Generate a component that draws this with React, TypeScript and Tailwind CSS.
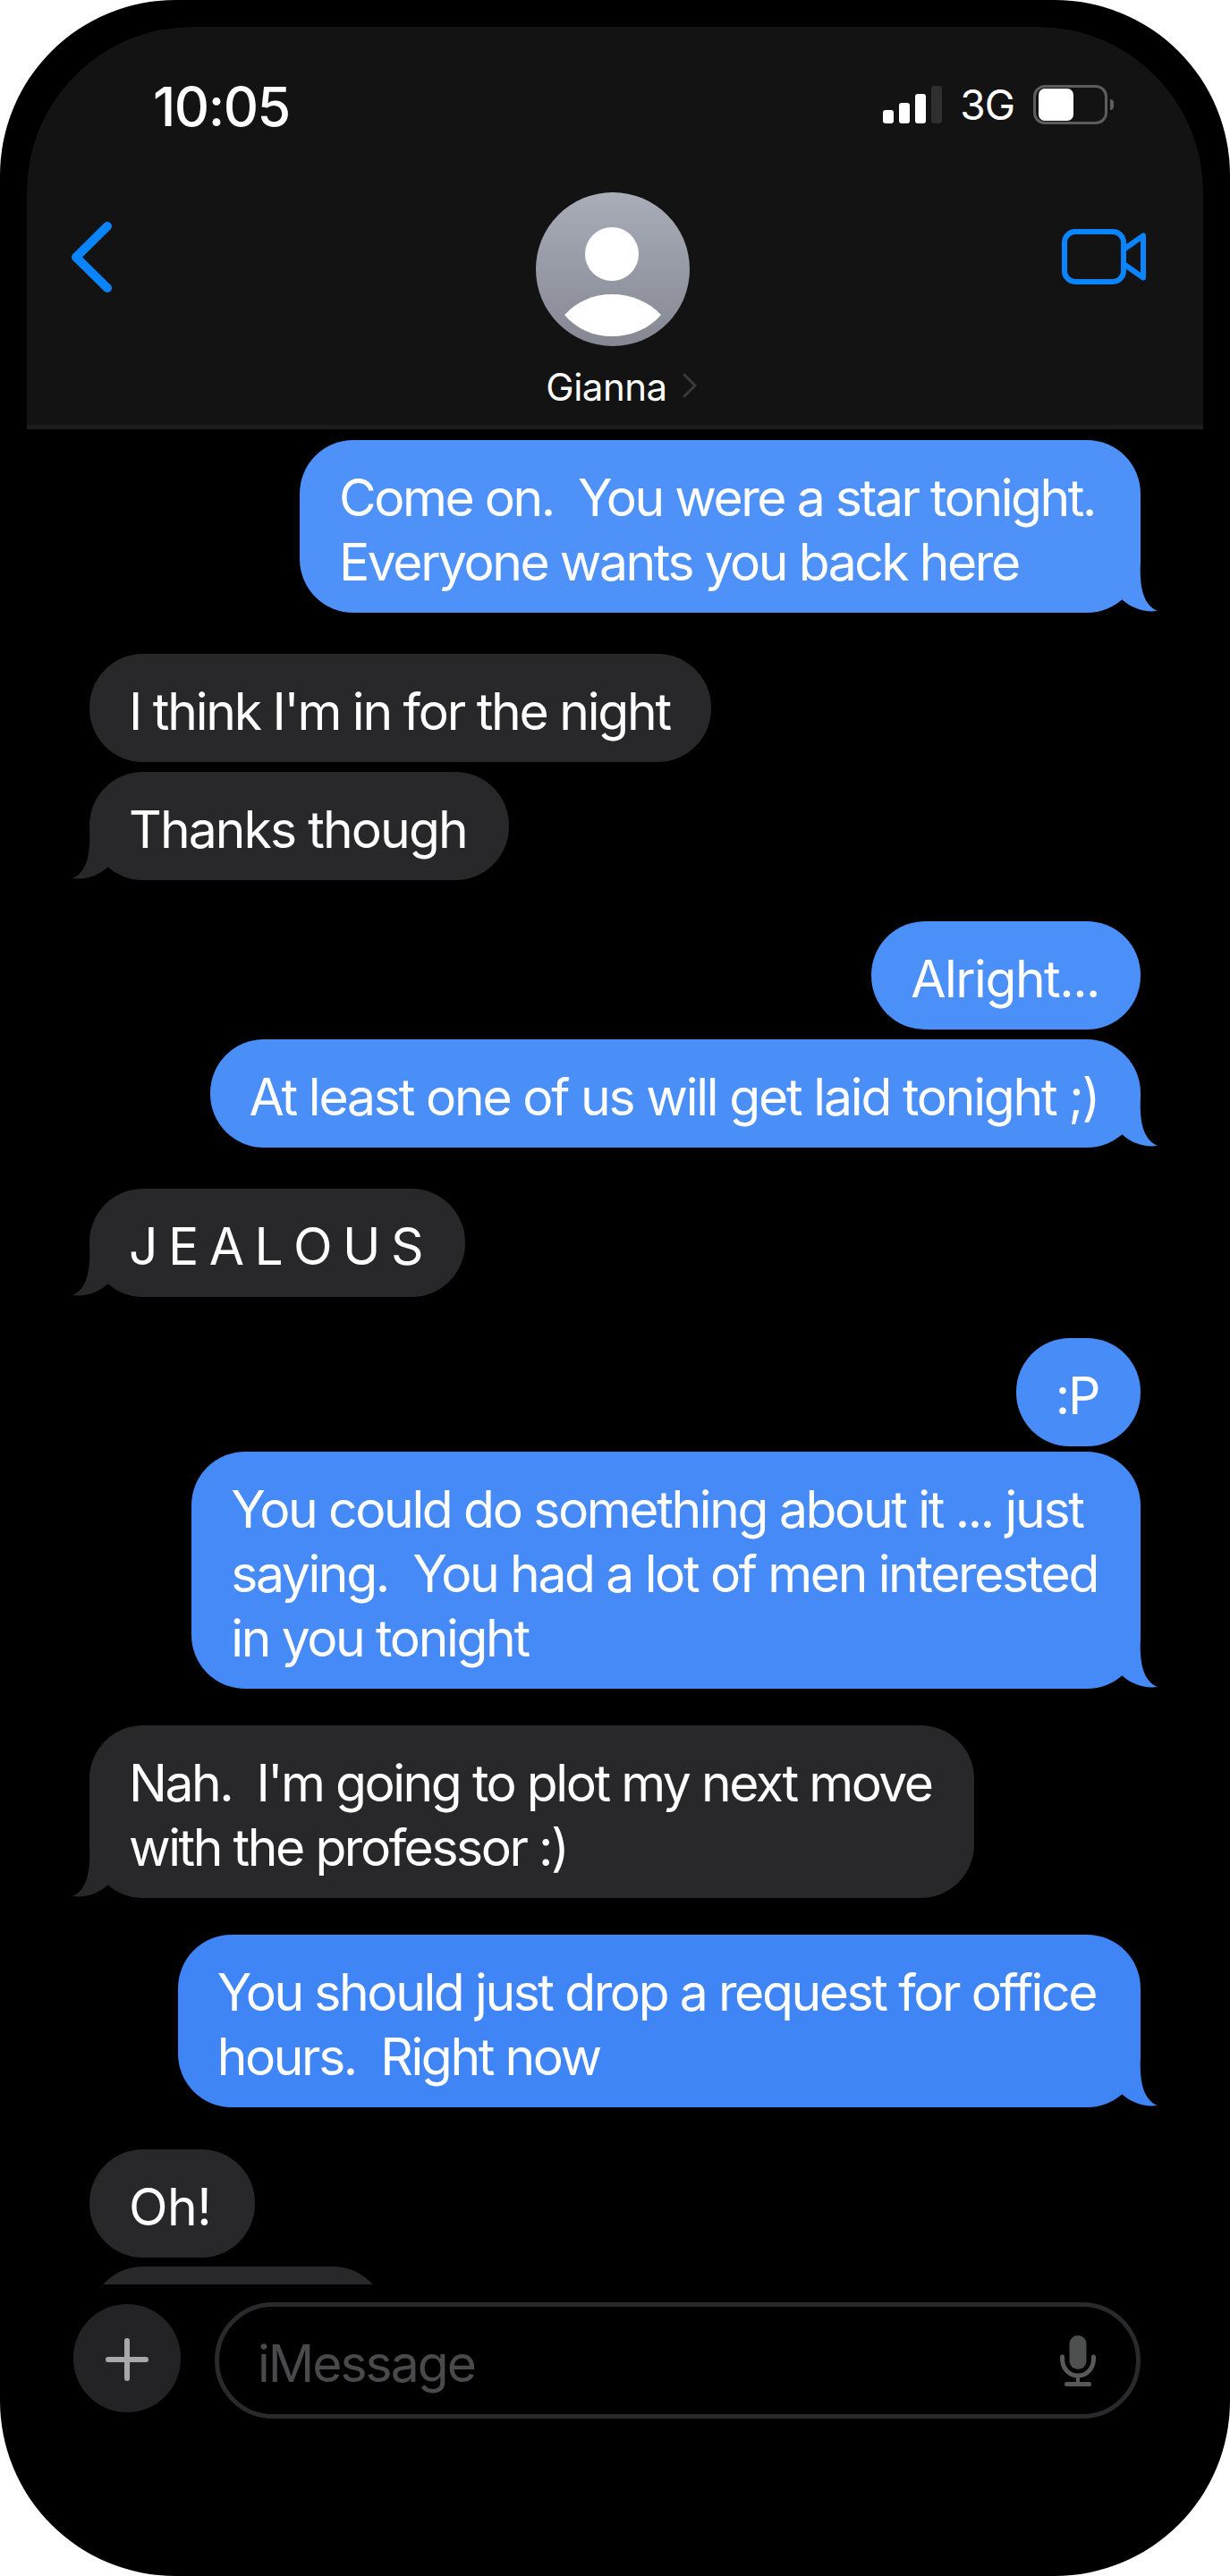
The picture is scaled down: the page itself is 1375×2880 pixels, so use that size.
const Tail = ({ side, fill }: { side: "left" | "right"; fill: string }) => {
  return (
    <svg
      viewBox="0 0 75 66"
      className={`absolute bottom-0 h-[66px] w-[75px] ${fill} ${
        side === "right" ? "right-[-19px]" : "left-[-19px] -scale-x-100"
      }`}
    >
      <path d="M56 6C55 30 56 56 75 64C60 66 46 61 35 51L20 55V6Z" />
    </svg>
  );
};

type BubbleProps = {
  side: "left" | "right";
  bg: string;
  fill?: string;
  className?: string;
  children?: React.ReactNode;
};

const Bubble = ({ side, bg, fill, className, children }: BubbleProps) => {
  return (
    <div
      className={`relative rounded-[60px] pt-[29px] pb-[20px] pl-[44px] text-[57px] leading-[72px] whitespace-pre text-white ${bg} ${
        side === "right" ? "self-end" : "self-start"
      } ${className ?? ""}`}
    >
      {children}
      {fill && <Tail side={side} fill={fill} />}
    </div>
  );
};

const App = () => {
  return (
    <div className="h-[2880px] w-[1375px] bg-white [font-family:Inter,sans-serif]">
      <div className="flex h-full flex-col overflow-hidden rounded-[196px] bg-black">
        {/* header */}
        <div className="mx-[30px] mt-[30px] h-[450px] shrink-0 rounded-t-[185px] border-b-[5px] border-[#1c1c1c] bg-[#131313]">
          <div className="flex h-[110px] items-start justify-between pt-[57px] pr-[100px] pl-[141px]">
            <span className="text-[61px] leading-[64px] font-[450] tracking-[-1.5px] text-white">10:05</span>
            <div className="mt-[5px] flex items-center">
              <div className="flex items-end gap-[6px]">
                <div className="h-[15px] w-[12px] rounded-[3px] bg-white" />
                <div className="h-[23px] w-[12px] rounded-[3px] bg-white" />
                <div className="h-[33px] w-[12px] rounded-[3px] bg-white" />
                <div className="h-[42px] w-[12px] rounded-[3px] bg-[#2f2f2f]" />
              </div>
              <span className="ml-[20px] text-[46px] leading-[50px] tracking-[-1px] text-white">3G</span>
              <div className="ml-[21px] flex h-[44px] w-[83px] items-center rounded-[13px] border-[3px] border-[#5d5d5d] pl-[3px]">
                <div className="h-[36px] w-[39px] rounded-[7px] bg-white" />
              </div>
              <div className="ml-[3px] h-[12px] w-[4px] rounded-r-[4px] bg-[#5d5d5d]" />
            </div>
          </div>
          <div className="mt-[75px] grid grid-cols-3 pr-[62px] pl-[50px]">
            <svg width="45" height="79" viewBox="0 0 45 79" className="mt-[33px]">
              <path d="M40 5L5 39.5L40 74" fill="none" stroke="#0a84ff" strokeWidth="10" strokeLinecap="round" strokeLinejoin="round" />
            </svg>
            <div className="flex flex-col items-center">
              <svg width="172" height="172" viewBox="0 0 172 172" className="ml-[6px]">
                <defs>
                  <linearGradient id="avatar" x1="0" y1="0" x2="0" y2="1">
                    <stop offset="0" stopColor="#a8adb8" />
                    <stop offset="1" stopColor="#858892" />
                  </linearGradient>
                </defs>
                <circle cx="86" cy="86" r="86" fill="url(#avatar)" />
                <circle cx="85" cy="69" r="30" fill="#fff" />
                <path d="M32 137C46 122 64 114 85 114C106 114 126 122 140 137C126 153 106 161 85 161C64 161 46 153 32 137Z" fill="#fff" />
              </svg>
              <div className="mt-[22px] ml-[26px] flex items-center">
                <span className="text-[42px] leading-[48px] tracking-[-0.5px] text-white">Gianna</span>
                <svg width="16" height="28" viewBox="0 0 16 28" className="mt-[-4px] ml-[17px]">
                  <path d="M2 2L14 14L2 26" fill="none" stroke="#3a3a3a" strokeWidth="3" strokeLinecap="round" />
                </svg>
              </div>
            </div>
            <svg width="96" height="62" viewBox="0 0 96 62" className="mt-[41px] justify-self-end">
              <rect x="3" y="3" width="66" height="56" rx="12" fill="none" stroke="#0a84ff" strokeWidth="6" />
              <path d="M69 23L91 7.5V54.5L69 39" fill="none" stroke="#0a84ff" strokeWidth="6" strokeLinejoin="round" />
            </svg>
          </div>
        </div>

        {/* messages */}
        <div className="flex h-[2074px] shrink-0 flex-col overflow-hidden pt-[12px] pr-[100px] pl-[100px]">
          <Bubble side="right" bg="bg-[#4e92f9]" fill="fill-[#4e92f9]" className="pr-[51px] tracking-[-2.45px]">{"Come on.  You were a star tonight.\nEveryone wants you back here"}</Bubble>
          <Bubble side="left" bg="bg-[#28282a]" className="mt-[46px] pr-[46px] tracking-[-2.25px]">I think I'm in for the night</Bubble>
          <Bubble side="left" bg="bg-[#28282a]" fill="fill-[#28282a]" className="mt-[11px] pr-[47px] tracking-[-1.9px]">Thanks though</Bubble>
          <Bubble side="right" bg="bg-[#4b8ff8]" className="mt-[46px] pr-[46px] tracking-[-1.5px]">Alright...</Bubble>
          <Bubble side="right" bg="bg-[#4a8ef8]" fill="fill-[#4a8ef8]" className="mt-[11px] pr-[47px] tracking-[-2.2px]">At least one of us will get laid tonight ;)</Bubble>
          <Bubble side="left" bg="bg-[#28282a]" fill="fill-[#28282a]" className="mt-[46px] pr-[49px] tracking-[-2.3px]">J E A L O U S</Bubble>
          <Bubble side="right" bg="bg-[#478cf7]" className="mt-[46px] pr-[47px] tracking-[-2.3px]">:P</Bubble>
          <Bubble side="right" bg="bg-[#458af7]" fill="fill-[#458af7]" className="mt-[6px] pr-[48px] tracking-[-2.35px]">{"You could do something about it ... just\nsaying.  You had a lot of men interested\nin you tonight"}</Bubble>
          <Bubble side="left" bg="bg-[#28282a]" fill="fill-[#28282a]" className="mt-[41px] pr-[47px] tracking-[-2.45px]">{"Nah.  I'm going to plot my next move\nwith the professor :)"}</Bubble>
          <Bubble side="right" bg="bg-[#4085f5]" fill="fill-[#4085f5]" className="mt-[41px] pr-[50px] tracking-[-2.4px]">{"You should just drop a request for office\nhours.  Right now"}</Bubble>
          <Bubble side="left" bg="bg-[#28282a]" className="mt-[47px] pr-[49px] tracking-[-0.5px]">Oh!</Bubble>
          <div className="mt-[10px] h-[121px] w-[332px] shrink-0 rounded-[60px] bg-[#28282a]" />
        </div>

        {/* composer */}
        <div className="mt-[20px] flex items-start pr-[100px] pl-[82px]">
          <div className="mt-[2px] flex h-[121px] w-[120px] shrink-0 items-center justify-center rounded-full bg-[#232224]">
            <svg width="48" height="48" viewBox="0 0 48 48" className="mt-[3px]">
              <path d="M24 3V45M3 24H45" stroke="#a8a8aa" strokeWidth="6" strokeLinecap="round" />
            </svg>
          </div>
          <div className="ml-[38px] flex h-[130px] flex-1 items-center justify-between rounded-[65px] border-[5px] border-[#292a2c] pr-[45px] pl-[43px]">
            <span className="pt-[8px] text-[57px] leading-[72px] tracking-[-2px] text-[#4a4a4c]">iMessage</span>
            <svg width="40" height="57" viewBox="0 0 40 57">
              <rect x="10.5" y="0" width="19" height="38" rx="9.5" fill="#4e4f4f" />
              <path d="M2.5 24V26C2.5 37 10 45 20 45C30 45 37.5 37 37.5 26V24" fill="none" stroke="#595959" strokeWidth="5" strokeLinecap="round" />
              <path d="M20 45V54" fill="none" stroke="#595959" strokeWidth="4" />
              <path d="M7.5 54.5H32.5" fill="none" stroke="#595959" strokeWidth="5" strokeLinecap="round" />
            </svg>
          </div>
        </div>
      </div>
    </div>
  );
};

export default App;
